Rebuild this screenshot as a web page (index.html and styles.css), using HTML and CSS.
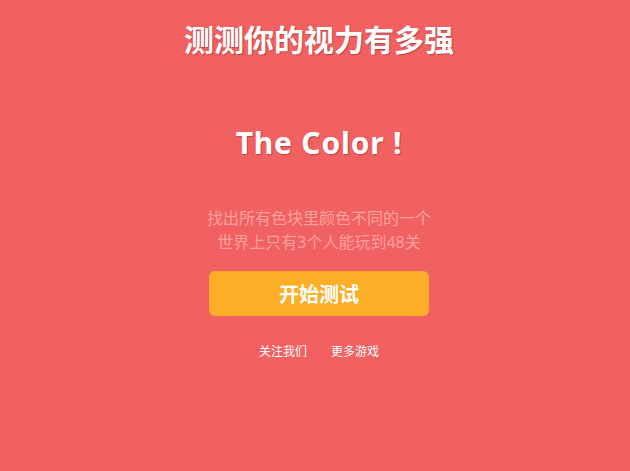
FILE: index.html
```html
<!DOCTYPE html>
<html lang="zh-CN">

<head>
    <meta charset="UTF-8" />
    <meta name="viewport" content="width=device-width, initial-scale=1.0" />
    <title>测测你的视力有多强</title>
    <link rel="stylesheet" href="styles.css">
</head>

<body>
    <div class="page">
        <h1 class="title">测测你的视力有多强</h1>
        <h2 class="logo">The Color !</h2>
        <div class="desc">
            <p>找出所有色块里颜色不同的一个</p>
            <p>世界上只有3个人能玩到48关</p>
        </div>
        <button class="start">开始测试</button>
        <div class="links">
            <a href="#">关注我们</a>
            <a href="#">更多游戏</a>
        </div>
    </div>
</body>

</html>
```

FILE: styles.css
```css
html,
body {
    margin: 0;
    padding: 0;
    height: 100%;
}

body {
    background-color: #f16161;
    font-family: "Noto Sans", "Noto Sans CJK SC", sans-serif;
    color: white;
}

.page {
    display: flex;
    flex-flow: column;
    align-items: center;
    padding: 20px 0 0 8px;
}

.title {
    margin: 0;
    height: 40px;
    line-height: 40px;
    font-size: 30px;
    font-weight: bold;
    text-shadow: 1px 1px 1px rgba(120, 40, 40, 0.45);
}

.logo {
    margin: 63px 0 0;
    height: 40px;
    line-height: 40px;
    font-size: 30px;
    letter-spacing: 0.8px;
    font-weight: bold;
    text-shadow: 1px 1px 1px rgba(120, 40, 40, 0.45);
}

.desc {
    margin-top: 43px;
    text-align: center;
    color: #fda0a0;
    font-size: 16px;
}

.desc p {
    margin: 0;
    line-height: 24px;
}

.start {
    margin-top: 17px;
    width: 220px;
    height: 45px;
    border: none;
    border-radius: 6px;
    background-color: #fcae26;
    color: white;
    font-family: inherit;
    font-size: 20px;
    font-weight: bold;
    cursor: pointer;
}

.links {
    display: flex;
    gap: 24px;
    margin-top: 28px;
}

.links a {
    color: white;
    text-decoration: none;
    font-size: 12px;
    line-height: 16px;
}
```
